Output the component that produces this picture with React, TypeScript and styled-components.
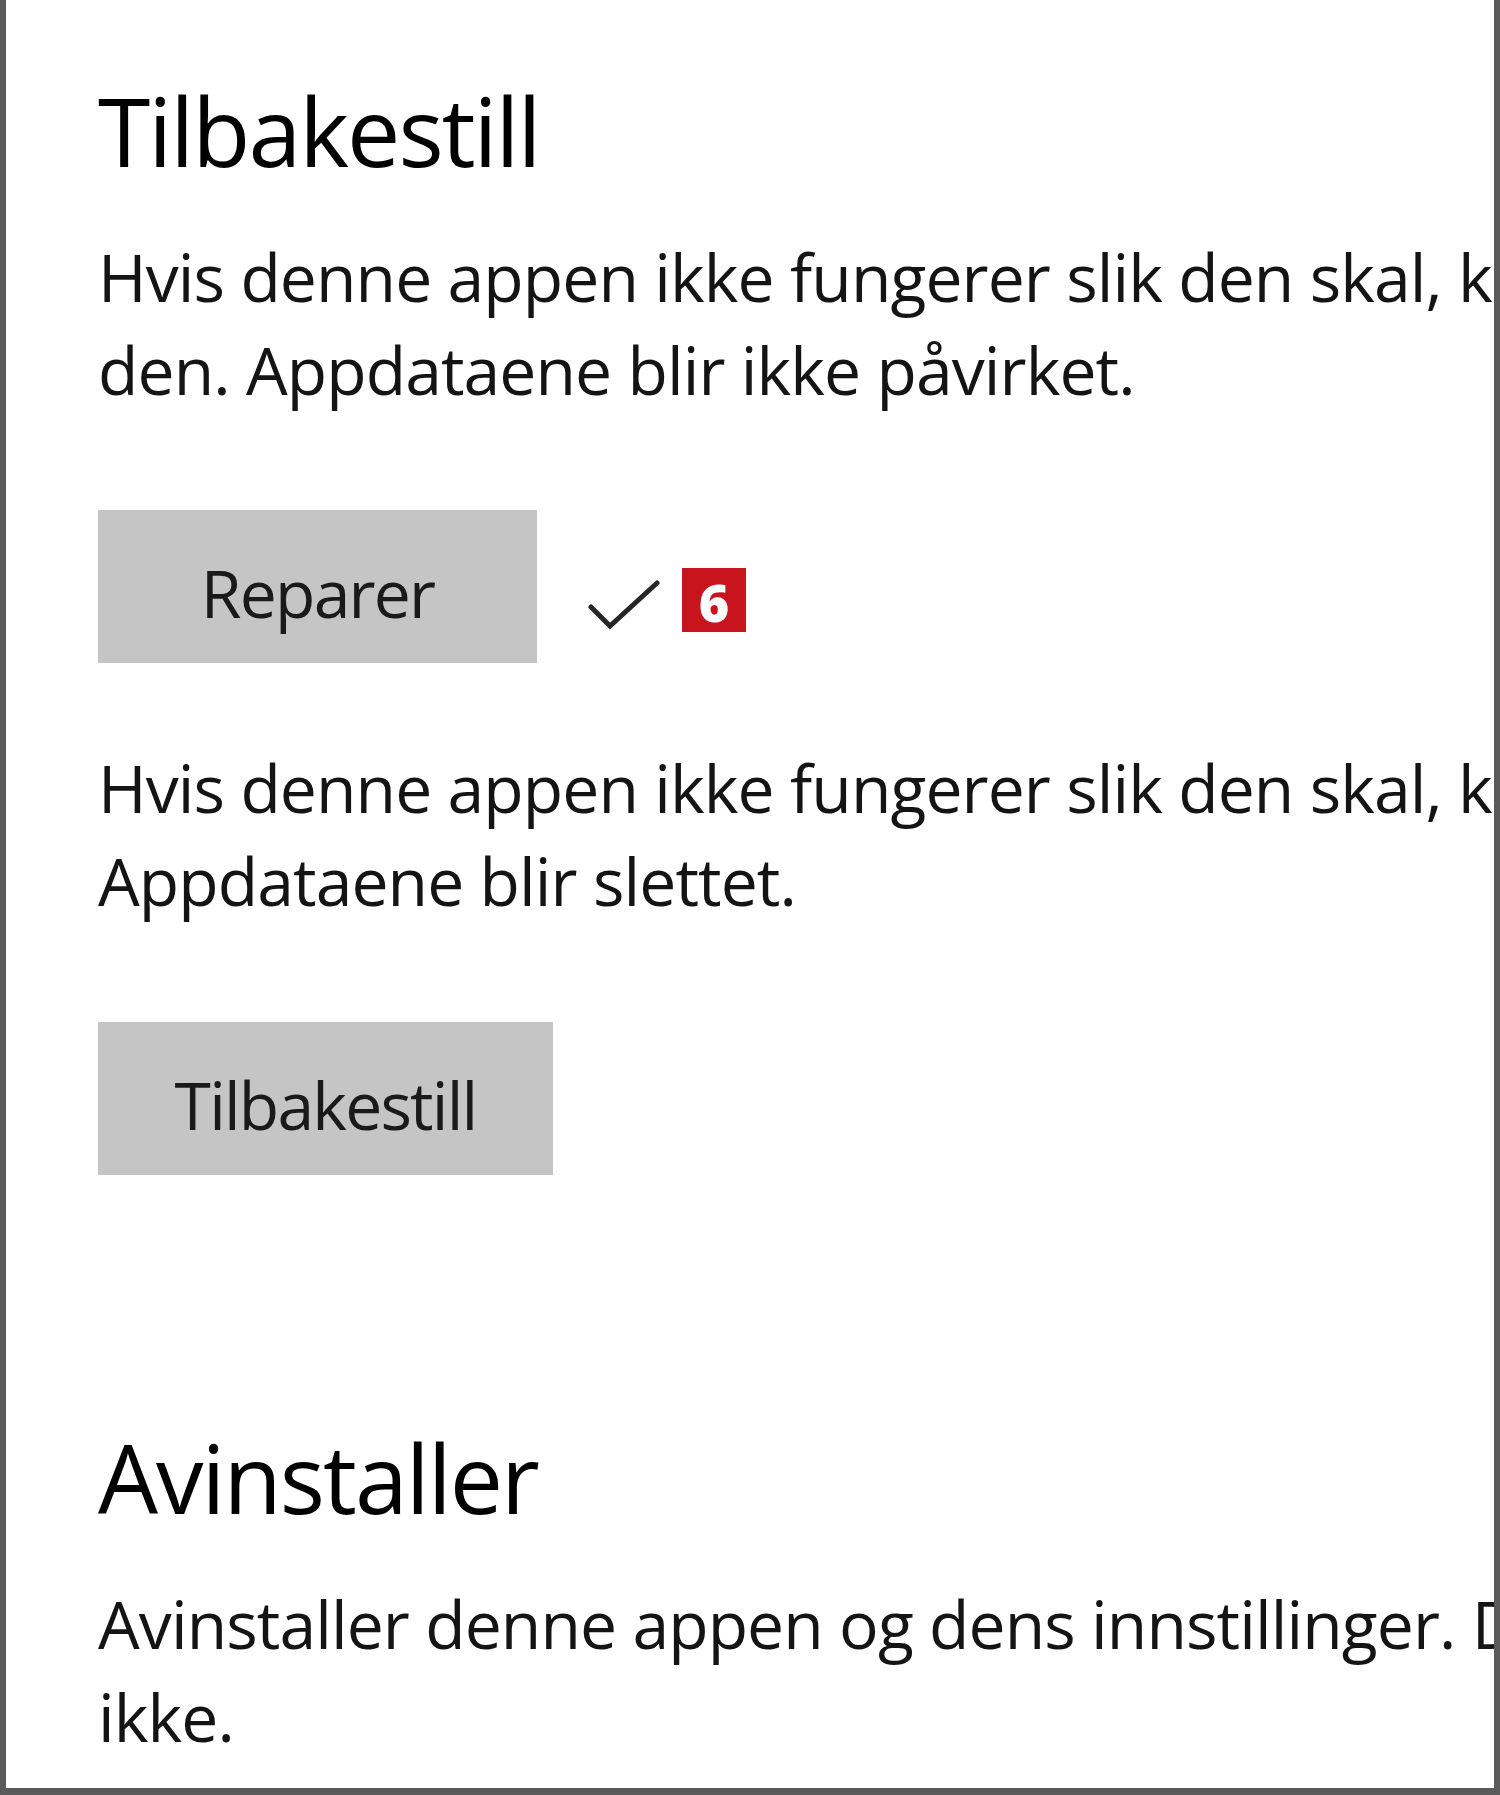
import React from "react";
import styled, { createGlobalStyle } from "styled-components";

const GlobalStyle = createGlobalStyle`
  html, body {
    margin: 0;
    padding: 0;
    background: #ffffff;
  }
  body {
    font-family: "Open Sans", "Noto Sans", sans-serif;
    color: #111111;
  }
`;

const Panel = styled.main`
  box-sizing: border-box;
  width: 1500px;
  height: 1795px;
  border-style: solid;
  border-color: #5a5a5a;
  border-width: 0 6px 7px 6px;
  overflow: hidden;
  padding: 71px 0 0 92px;
  display: flex;
  flex-direction: column;
  align-items: flex-start;
  background: #ffffff;
`;

const Heading = styled.h2<{ $top?: number }>`
  margin: ${(p) => p.$top ?? 0}px 0 0;
  font-family: "Open Sans", "Noto Sans", sans-serif;
  font-weight: 400;
  font-size: 95px;
  line-height: 118px;
  letter-spacing: -2px;
  color: #000000;
  white-space: nowrap;
`;

const Text = styled.p<{ $top: number }>`
  margin: ${(p) => p.$top}px 0 0;
  font-size: 66px;
  font-weight: 400;
  line-height: 93px;
  letter-spacing: -0.9px;
  color: #141414;
  white-space: nowrap;
`;

const ActionRow = styled.div<{ $top: number }>`
  display: flex;
  align-items: flex-start;
  margin-top: ${(p) => p.$top}px;
`;

const Button = styled.button<{ $width: number }>`
  box-sizing: border-box;
  width: ${(p) => p.$width}px;
  height: 153px;
  padding: 12px 0 0;
  border: 0;
  border-radius: 0;
  background: #c4c5c4;
  font-family: "Open Sans", "Noto Sans", sans-serif;
  font-size: 66px;
  font-weight: 400;
  line-height: 93px;
  letter-spacing: -1.8px;
  color: #1a1a1a;
  display: flex;
  align-items: center;
  justify-content: center;
  white-space: nowrap;
  cursor: pointer;
`;

const CheckMark = styled.svg`
  display: block;
  flex: none;
  width: 72px;
  height: 52px;
  margin: 69px 0 0 51px;
`;

const Badge = styled.span`
  box-sizing: border-box;
  flex: none;
  width: 64px;
  height: 64px;
  margin: 58px 0 0 22px;
  padding-top: 3px;
  background: #c8141c;
  color: #ffffff;
  font-family: "Open Sans", "Liberation Sans", sans-serif;
  font-weight: 800;
  font-size: 52px;
  line-height: 52px;
  display: flex;
  align-items: center;
  justify-content: center;
`;

export default function App() {
  return (
    <>
      <GlobalStyle />
      <Panel>
        <Heading>Tilbakestill</Heading>
        <Text $top={41}>
          Hvis denne appen ikke fungerer slik den skal, kan du prøve å reparere
          <br />
          den. Appdataene blir ikke påvirket.
        </Text>
        <ActionRow $top={94}>
          <Button $width={439}>Reparer</Button>
          <CheckMark viewBox="0 0 72 52" aria-hidden="true">
            <polyline
              points="3,28 22,47 69,4"
              fill="none"
              stroke="#262626"
              strokeWidth="5"
              strokeLinecap="round"
              strokeLinejoin="miter"
            />
          </CheckMark>
          <Badge>6</Badge>
        </ActionRow>
        <Text $top={78}>
          Hvis denne appen ikke fungerer slik den skal, kan du tilbakestille den.
          <br />
          Appdataene blir slettet.
        </Text>
        <ActionRow $top={95}>
          <Button $width={455}>Tilbakestill</Button>
        </ActionRow>
        <Heading $top={243}>Avinstaller</Heading>
        <Text $top={41}>
          Avinstaller denne appen og dens innstillinger. Dokumentene dine påvirkes
          <br />
          ikke.
        </Text>
      </Panel>
    </>
  );
}
